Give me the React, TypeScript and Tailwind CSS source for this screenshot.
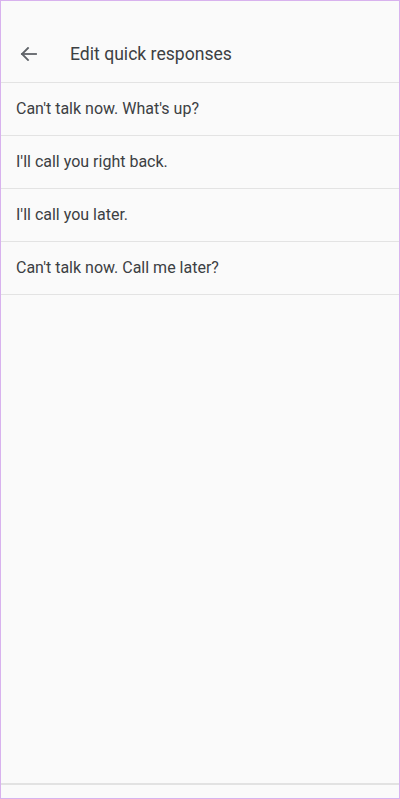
const RESPONSES = [
  "Can't talk now. What's up?",
  "I'll call you right back.",
  "I'll call you later.",
  "Can't talk now. Call me later?",
];

export default function App() {
  return (
    <div
      className="w-[400px] h-[799px] flex flex-col bg-[#fafafa] border border-[#d8b2ee] text-[#3c4043]"
      style={{ fontFamily: "Roboto, 'Noto Sans', sans-serif" }}
    >
      {/* Header */}
      <header className="h-[82px] flex flex-col justify-end pb-[3px] border-b border-[#e3e3e3] flex-shrink-0">
        <div className="h-[50px] flex items-center">
          <div className="w-[69px] pl-[19px] flex items-center">
            <svg width="17" height="14" viewBox="0 0 17 14" fill="none" stroke="#5f6368" strokeWidth="1.8" strokeLinecap="square">
              <path d="M2 7H16" />
              <path d="M8 1L2 7l6 6" />
            </svg>
          </div>
          <h1 className="text-[17.6px] text-[#3c4043]">Edit quick responses</h1>
        </div>
      </header>

      {/* Liste */}
      <ul>
        {RESPONSES.map((r) => (
          <li key={r} className="h-[53px] flex items-center px-[15px] border-b border-[#e3e3e3] text-[16px]">
            {r}
          </li>
        ))}
      </ul>

      <div className="flex-1" />
      <div className="h-[15px] border-t-2 border-[#e2e2e2] flex-shrink-0" />
    </div>
  );
}
